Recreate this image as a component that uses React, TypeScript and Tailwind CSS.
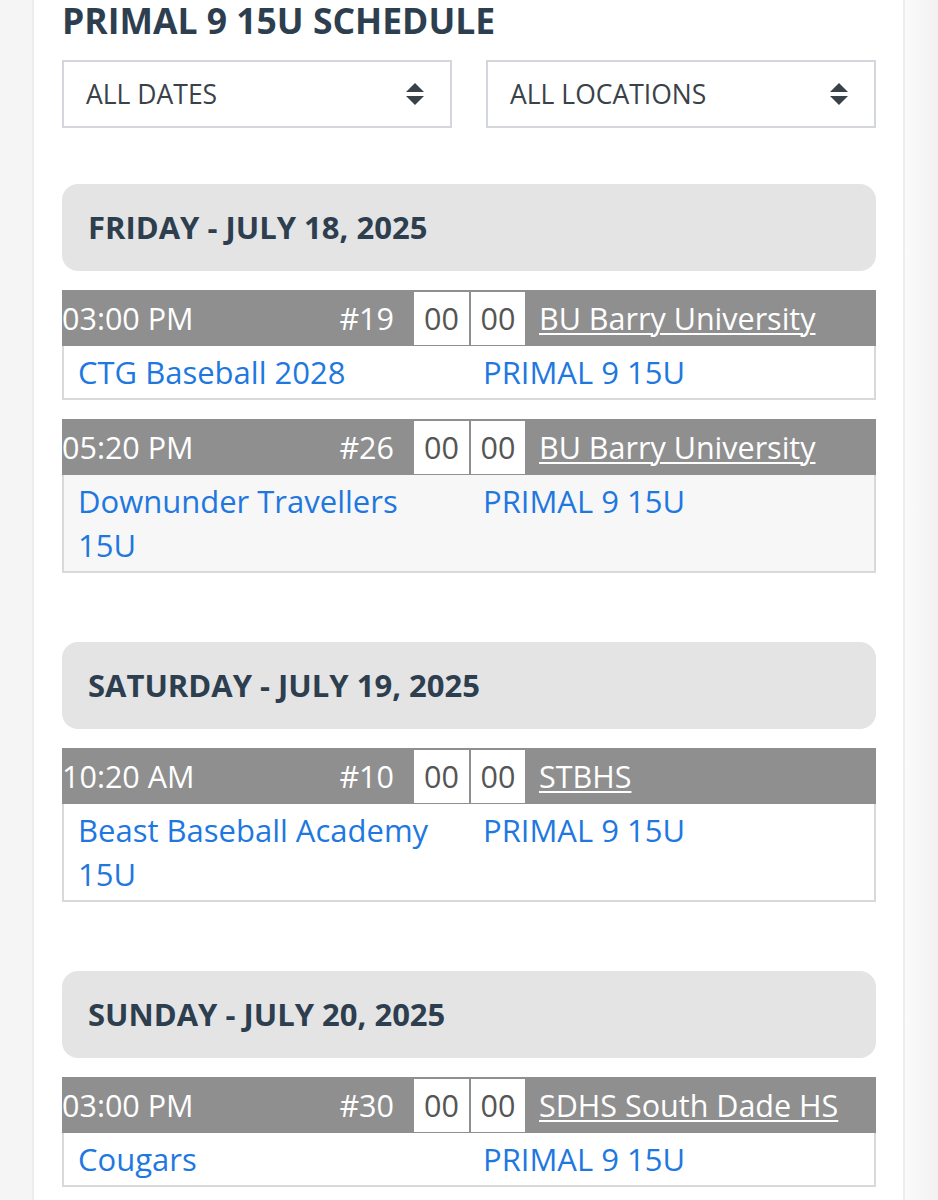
import React from "react";

type Game = {
  time: string;
  num: string;
  loc: string;
  home: string;
  away: string;
};

type Day = { label: string; games: Game[] };

const days: Day[] = [
  {
    label: "FRIDAY - JULY 18, 2025",
    games: [
      { time: "03:00 PM", num: "#19", loc: "BU Barry University", home: "CTG Baseball 2028", away: "PRIMAL 9 15U" },
      { time: "05:20 PM", num: "#26", loc: "BU Barry University", home: "Downunder Travellers 15U", away: "PRIMAL 9 15U" },
    ],
  },
  {
    label: "SATURDAY - JULY 19, 2025",
    games: [
      { time: "10:20 AM", num: "#10", loc: "STBHS", home: "Beast Baseball Academy 15U", away: "PRIMAL 9 15U" },
    ],
  },
  {
    label: "SUNDAY - JULY 20, 2025",
    games: [
      { time: "03:00 PM", num: "#30", loc: "SDHS South Dade HS", home: "Cougars", away: "PRIMAL 9 15U" },
    ],
  },
];

function SortIcon() {
  return (
    <svg width="18" height="22" viewBox="0 0 18 22" className="shrink-0">
      <polygon points="0,9 9,0 18,9" fill="#3a4249" />
      <polygon points="0,13 18,13 9,22" fill="#3a4249" />
    </svg>
  );
}

function Select({ label }: { label: string }) {
  return (
    <div className="h-[68px] border-2 border-[#d3d6da] bg-white flex items-center justify-between pl-[22px] pr-[26px]">
      <span className="text-[26.5px] text-[#3a4249] leading-none">{label}</span>
      <SortIcon />
    </div>
  );
}

function GameCard({ g, striped }: { g: Game; striped: boolean }) {
  return (
    <div className="mt-[19px]">
      <div className="h-[56px] bg-[#8f8f8f] flex items-center text-[30.5px] leading-[56px]">
        <div className="w-[352px] flex justify-between pr-[20px] text-white">
          <span>{g.time}</span>
          <span>{g.num}</span>
        </div>
        <div className="w-[55px] h-[53px] bg-white flex items-center justify-center text-[#555555] leading-none">00</div>
        <div className="w-[54px] h-[53px] bg-white ml-[2px] flex items-center justify-center text-[#555555] leading-none">00</div>
        <span className="pl-[14px] text-white underline decoration-2 underline-offset-[3px] whitespace-nowrap">{g.loc}</span>
      </div>
      <div
        className={
          "grid grid-cols-2 border-x-2 border-b-2 border-[#d9d9d9] pt-[4px] pb-[4px] text-[31px] leading-[44px] text-[#1e78e0] " +
          (striped ? "bg-[#f7f7f7]" : "bg-white")
        }
      >
        <div className="pl-[14px] pr-[14px]">{g.home}</div>
        <div className="pl-[14px] pr-[14px]">{g.away}</div>
      </div>
    </div>
  );
}

export default function App() {
  return (
    <div
      className="w-[938px] h-[1200px] overflow-hidden flex bg-white"
      style={{ fontFamily: '"Open Sans", "Noto Sans", sans-serif' }}
    >
      <div className="w-[34px] shrink-0 bg-[#f5f5f5] border-r-2 border-[#ececec]" />
      <div className="flex-1 bg-white pl-[28px] pr-[27px]">
        <h1 className="text-[35.5px] leading-[40px] font-bold text-[#2d3e4f] whitespace-nowrap">PRIMAL 9 15U SCHEDULE</h1>
        <div className="grid grid-cols-2 gap-[34px] mt-[20px]">
          <Select label="ALL DATES" />
          <Select label="ALL LOCATIONS" />
        </div>
        {days.map((d, di) => (
          <div key={di} className={di === 0 ? "mt-[56px]" : "mt-[69px]"}>
            <div className="h-[87px] rounded-[16px] bg-[#e4e4e4] flex items-center pl-[26px]">
              <span className="text-[31px] font-bold text-[#2d3e4f]">{d.label}</span>
            </div>
            {d.games.map((g, gi) => (
              <GameCard key={gi} g={g} striped={gi % 2 === 1} />
            ))}
          </div>
        ))}
      </div>
      <div className="w-[35px] shrink-0 border-l-2 border-[#ededed] bg-gradient-to-r from-[#fbfbfb] to-[#f1f1f1]" />
    </div>
  );
}
